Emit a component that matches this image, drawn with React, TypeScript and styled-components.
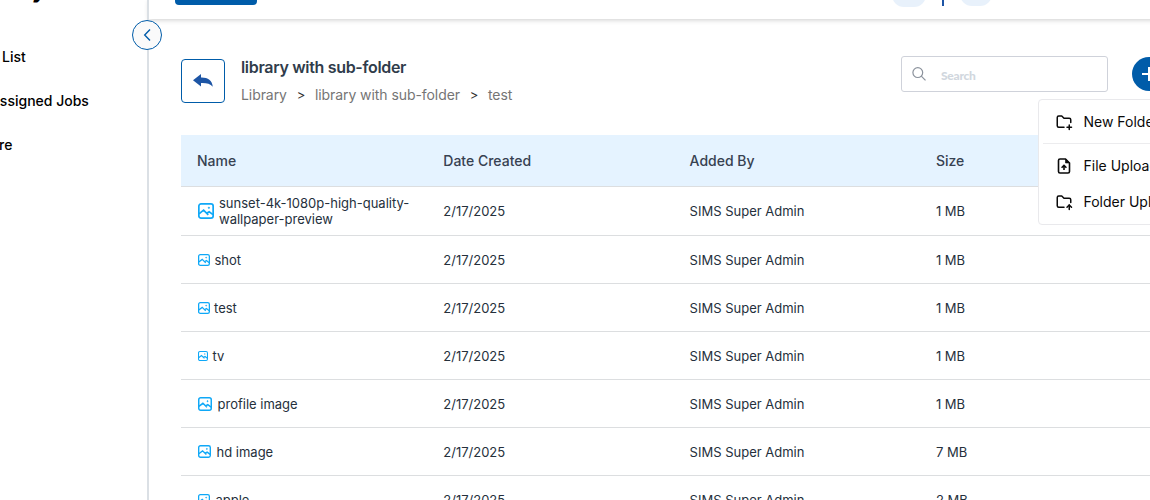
import React from 'react';
import styled, { createGlobalStyle } from 'styled-components';
import { TbFolderPlus, TbFolderUp } from 'react-icons/tb';

const Global = createGlobalStyle`
  * { box-sizing: border-box; }
  body { margin: 0; background: #fff; font-family: Inter, "Liberation Sans", sans-serif; overflow: hidden; }
`;

const Page = styled.div`
  position: relative;
  display: flex;
  width: 1150px;
  height: 500px;
  overflow: hidden;
`;

const Sidebar = styled.aside`
  position: relative;
  flex: none;
  width: 149px;
  border-right: 2px solid #dbe0e5;
`;

const Brand = styled.div`
  height: 47px;
  margin-top: -23px;
  padding-left: 32px;
  font-size: 22px;
  line-height: 27px;
  font-weight: 700;
  color: #000;
`;

const NavItem = styled.div<{ $shift: number }>`
  height: 44px;
  margin-left: ${p => p.$shift}px;
  padding-top: 22px;
  font-size: 14px;
  line-height: 22px;
  font-weight: 500;
  color: #000;
  white-space: nowrap;
`;

const Collapse = styled.button`
  position: absolute;
  z-index: 3;
  top: 20px;
  left: 132px;
  display: flex;
  align-items: center;
  justify-content: center;
  width: 30px;
  height: 30px;
  padding: 0;
  border: 1px solid #005ca9;
  border-radius: 50%;
  background: #fafafa;
`;

const Main = styled.main`
  flex: none;
  width: 1120px;
`;

const TopBar = styled.header`
  display: flex;
  align-items: flex-start;
  height: 19px;
  padding-left: 26px;
  box-shadow: 0 1px 5px rgba(0, 0, 0, 0.2);
`;

const TopButton = styled.div`
  width: 82px;
  height: 40px;
  margin-top: -35px;
  border-radius: 4px;
  background: #005ca9;
`;

const TopAvatar = styled.div<{ $gap: number; $lift: number; $size: number }>`
  width: ${p => p.$size}px;
  height: 36px;
  margin: ${p => p.$lift}px 0 0 ${p => p.$gap}px;
  border-radius: 12px;
  background: #e8f1fb;
`;

const TopDivider = styled.div`
  width: 2px;
  height: 6px;
  margin-left: 16px;
  background: #1d55a5;
`;

const Heading = styled.section`
  display: flex;
  height: 116px;
  padding: 37px 0 0 32px;
`;

const BackButton = styled.button`
  display: flex;
  align-items: center;
  justify-content: center;
  width: 44px;
  height: 44px;
  margin-top: 3px;
  padding: 0;
  border: 1px solid #005ca9;
  border-radius: 4px;
  background: #fff;
`;

const Titles = styled.div`
  width: 676px;
  padding: 0 0 0 16px;
`;

const Title = styled.h1`
  margin: 0;
  font-size: 16px;
  line-height: 23px;
  font-weight: 600;
  letter-spacing: -0.32px;
  color: #303c4b;
`;

const Crumbs = styled.nav`
  display: flex;
  margin-top: 5px;
  font-size: 14px;
  line-height: 21px;
  letter-spacing: -0.07px;
  color: #757575;
`;

const Separator = styled.span`
  width: 28px;
  text-align: center;
  font-size: 13px;
  line-height: 22px;
  color: #303030;
`;

const SearchBox = styled.label`
  display: flex;
  align-items: center;
  width: 207px;
  height: 36px;
  padding-left: 10px;
  border: 1px solid #cfd2da;
  border-radius: 3px;
`;

const SearchHint = styled.span`
  margin: 3px 0 0 14px;
  font-family: Lato, sans-serif;
  font-size: 12px;
  font-weight: 900;
  letter-spacing: -0.25px;
  color: #d1d7de;
`;

const AddButton = styled.button`
  display: flex;
  align-items: center;
  justify-content: center;
  width: 34px;
  height: 34px;
  margin: 1px 0 0 24px;
  padding: 0;
  border: 0;
  border-radius: 50%;
  background: #005ca9;
`;

const Table = styled.div`
  margin-left: 32px;
`;

const Row = styled.div<{ $tall?: boolean }>`
  display: grid;
  grid-template-columns: 246.3px 246.3px 246.3px 1fr;
  align-items: center;
  height: ${p => (p.$tall ? 49 : 48)}px;
  padding-left: 16px;
  border-bottom: 1px solid #dcdee0;
  font-size: 13px;
  line-height: 16px;
  color: #25303c;
`;

const HeadRow = styled(Row)`
  height: 52px;
  background: #e5f3ff;
  font-size: 14px;
  font-weight: 500;
  color: #374151;
`;

const NameCell = styled.div`
  display: flex;
  align-items: center;
  padding-left: 1px;
`;

const FileIcon = styled.svg`
  flex: none;
`;

const FileName = styled.span<{ $gap: number }>`
  width: 206px;
  margin-left: ${p => p.$gap}px;
`;

const Menu = styled.div`
  position: absolute;
  z-index: 4;
  top: 99px;
  left: 1038px;
  width: 180px;
  height: 126px;
  padding: 4px;
  border: 1px solid #e9e9ec;
  border-radius: 4px;
  background: #fff;
`;

const MenuItem = styled.div`
  display: flex;
  align-items: center;
  height: 36px;
  padding-left: 12px;
  gap: 10.5px;
  font-size: 14px;
  color: #0a0a0a;
  white-space: nowrap;
`;

const MenuLabel = styled.span`
  line-height: 18px;
`;

const MenuRule = styled.div`
  height: 1px;
  margin: 3px 0 4px;
  background: #ececee;
`;

const PictureIcon = ({ size }: { size: number }) => (
  <FileIcon width={size} height={size} viewBox="0 0 16 16" fill="none" stroke="#0fa8f7" strokeWidth="1.7">
    <rect x="0.85" y="0.85" width="14.3" height="14.3" rx="2.2" />
    <path d="M1 10.8 5.6 7.2 10.3 11.8M8.6 10.3 11.2 8.8 15 11.6" />
    <circle cx="10.9" cy="4.8" r="0.7" fill="#0fa8f7" strokeWidth="0.6" />
  </FileIcon>
);

const files = [
  { name: 'sunset-4k-1080p-high-quality-wallpaper-preview', size: '1 MB', icon: 16, gap: 5 },
  { name: 'shot', size: '1 MB', icon: 12, gap: 4.5 },
  { name: 'test', size: '1 MB', icon: 12, gap: 4 },
  { name: 'tv', size: '1 MB', icon: 10, gap: 4.5 },
  { name: 'profile image', size: '1 MB', icon: 14, gap: 5.5 },
  { name: 'hd image', size: '7 MB', icon: 13, gap: 5.5 },
  { name: 'apple', size: '2 MB', icon: 12, gap: 5.5 },
];

export default function App() {
  return (
    <Page>
      <Global />
      <Sidebar>
        <Brand>y</Brand>
        <NavItem $shift={2}>List</NavItem>
        <NavItem $shift={-10}>Assigned Jobs</NavItem>
        <NavItem $shift={-1}>re</NavItem>
      </Sidebar>
      <Collapse aria-label="Collapse">
        <svg width="8" height="12" viewBox="0 0 8 12" fill="none" stroke="#005ca9" strokeWidth="1.4"><path d="M7 .6 1.7 6 7 11.4" /></svg>
      </Collapse>
      <Main>
        <TopBar>
          <TopButton />
          <TopAvatar $gap={635} $lift={-29} $size={34} />
          <TopDivider />
          <TopAvatar $gap={16} $lift={-30} $size={32} />
        </TopBar>
        <Heading>
          <BackButton aria-label="Back">
            <svg width="20" height="14" viewBox="0 0 20 14" fill="#1d55a5"><path d="M0 6.2 8 0v3.5c6.8-.2 11 2.7 11.8 9.2C17.2 9.7 13.5 8.8 8 9v3.4z" /></svg>
          </BackButton>
          <Titles>
            <Title>library with sub-folder</Title>
            <Crumbs>
              <span>Library</span><Separator>&gt;</Separator>
              <span>library with sub-folder</span><Separator>&gt;</Separator>
              <span>test</span>
            </Crumbs>
          </Titles>
          <SearchBox>
            <svg width="15" height="15" viewBox="0 0 15 15" fill="none" stroke="#8b929c" strokeWidth="1.2"><circle cx="5.8" cy="5.6" r="4.9" /><path d="m9.3 9.1 4.200 4.200" /></svg>
            <SearchHint>Search</SearchHint>
          </SearchBox>
          <AddButton aria-label="Add">
            <svg width="14" height="14" viewBox="0 0 14 14" stroke="#fff" strokeWidth="2"><path d="M7 0v14M0 7h14" /></svg>
          </AddButton>
        </Heading>
        <Table>
          <HeadRow><span>Name</span><span>Date Created</span><span>Added By</span><span>Size</span></HeadRow>
          {files.map((f, i) => (
            <Row key={f.name} $tall={i === 0}>
              <NameCell><PictureIcon size={f.icon} /><FileName $gap={f.gap}>{f.name}</FileName></NameCell>
              <span>2/17/2025</span><span>SIMS Super Admin</span><span>{f.size}</span>
            </Row>
          ))}
        </Table>
      </Main>
      <Menu>
        <MenuItem><TbFolderPlus size={18} /><MenuLabel>New Folder</MenuLabel></MenuItem>
        <MenuRule />
        <MenuItem>
          <svg width="18" height="18" viewBox="0 0 18 18" fill="none" stroke="currentColor" strokeWidth="1.6"><path d="M10.5 2H5a1.500 1.500 0 0 0-1.500 1.500v11A1.500 1.500 0 0 0 5 16h8a1.500 1.500 0 0 0 1.500-1.500V6z" /><path d="M10.5 2v4h4z" fill="currentColor" strokeWidth="0.6" /><path d="M9 13V8.5M6.600 10.700 9 8.300l2.400 2.400" /></svg>
          <MenuLabel>File Upload</MenuLabel>
        </MenuItem>
        <MenuItem><TbFolderUp size={18} /><MenuLabel>Folder Upload</MenuLabel></MenuItem>
      </Menu>
    </Page>
  );
}
